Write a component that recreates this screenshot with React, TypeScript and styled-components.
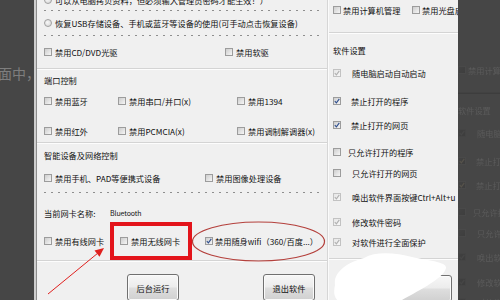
import React from "react";
import styled, { createGlobalStyle } from "styled-components";

const Global = createGlobalStyle`
  html, body { margin: 0; padding: 0; background: #464646; }
  body { font-family: "Noto Sans CJK SC", "Noto Sans", sans-serif; overflow: hidden; }
`;

const Screen = styled.div`
  position: relative;
  display: flex;
  width: 500px;
  height: 300px;
  overflow: hidden;
  background: #464646;
`;

const LeftGutter = styled.div`
  width: 34px;
  flex: none;
  padding-top: 64px;
  box-sizing: border-box;
  overflow: hidden;
`;

const GhostWords = styled.div`
  font-size: 14px;
  line-height: 18px;
  color: #7e7e7e;
  white-space: nowrap;
  margin-left: -2px;
`;

const Edge = styled.div`
  width: 2px;
  flex: none;
  background: #cdcdcd;
`;

const Window = styled.div`
  display: flex;
  width: 422px;
  flex: none;
  height: 300px;
  background: #f0f0f0;
  border-left: 1px solid #8c8c8c;
  box-sizing: border-box;
  font-size: 8.2px;
  color: #111;
`;

const LeftCol = styled.div`
  width: 290px;
  flex: none;
  box-sizing: border-box;
  padding-left: 7px;
  display: flex;
  flex-direction: column;
`;

const Divider = styled.div`
  width: 1px;
  flex: none;
  background: #d6d6d6;
  border-right: 1px solid #fbfbfb;
`;

const SettingsCol = styled.div<{ $ghost?: boolean }>`
  width: 129px;
  flex: none;
  box-sizing: border-box;
  padding-left: ${(p) => (p.$ghost ? 0 : 4)}px;
  display: flex;
  flex-direction: column;
  overflow: hidden;
  font-size: 8.2px;
  color: #111;
  ${(p) => (p.$ghost ? "filter: invert(1); opacity: 0.12;" : "")}
`;

const RightGutter = styled.div`
  width: 42px;
  flex: none;
  padding-top: 60px;
  box-sizing: border-box;
  overflow: hidden;
`;

const Row = styled.div<{ $h: number; $cols?: string; $mt?: number }>`
  display: grid;
  grid-template-columns: ${(p) => p.$cols ?? "1fr"};
  align-items: center;
  height: ${(p) => p.$h}px;
  margin-top: ${(p) => p.$mt ?? 0}px;
  white-space: nowrap;
  flex: none;
`;

const Item = styled.span<{ $gap?: number }>`
  display: flex;
  align-items: center;
  gap: ${(p) => p.$gap ?? 3}px;
  line-height: 1;
`;

const Box = styled.span<{ $dim?: boolean }>`
  width: 8px;
  height: 8px;
  box-sizing: border-box;
  border: 1px solid ${(p) => (p.$dim ? "#c2c2c2" : "#9c9c9c")};
  background: ${(p) =>
    p.$dim ? "linear-gradient(135deg, #e6e6e6, #f7f7f7)" : "linear-gradient(135deg, #cdcdcd, #f6f6f6)"};
  display: inline-flex;
  align-items: center;
  justify-content: center;
  flex: none;
`;

const Radio = styled.span`
  width: 8px;
  height: 8px;
  box-sizing: border-box;
  border: 1px solid #a0a0a0;
  border-radius: 50%;
  background: radial-gradient(circle at 40% 40%, #f8f8f8, #d2d2d2);
  flex: none;
`;

const Label = styled.span``;

const Small = styled.span`
  font-size: 7px;
  letter-spacing: -0.1px;
`;

const Dotted = styled.div<{ $mt?: number }>`
  height: 1px;
  flex: none;
  margin-top: ${(p) => p.$mt ?? 0}px;
  margin-right: 7px;
  background: repeating-linear-gradient(90deg, #8e8e8e 0 2px, transparent 2px 7px);
`;

const Sep = styled.div<{ $mt?: number; $inset?: number }>`
  height: 1px;
  flex: none;
  background: #d4d4d4;
  border-bottom: 1px solid #fdfdfd;
  margin-top: ${(p) => p.$mt ?? 0}px;
  margin-left: -${(p) => p.$inset ?? 7}px;
`;

const ButtonRow = styled.div<{ $mt: number; $pl: number; $gap?: number }>`
  display: flex;
  gap: ${(p) => p.$gap ?? 0}px;
  margin-top: ${(p) => p.$mt}px;
  padding-left: ${(p) => p.$pl}px;
  flex: none;
`;

const Button = styled.button`
  width: 52px;
  height: 27px;
  flex: none;
  border: 1px solid #707070;
  border-radius: 3px;
  background: linear-gradient(#f7f7f7 0%, #ececec 48%, #dedede 52%, #d0d0d0 100%);
  box-shadow: inset 0 0 0 1px #fbfbfb;
  font: inherit;
  font-size: 8.2px;
  color: #111;
  padding: 0;
`;

const Overlay = styled.svg`
  position: absolute;
  left: 0;
  top: 0;
  width: 500px;
  height: 300px;
  pointer-events: none;
`;

type CheckState = "off" | "on" | "dim";

const Check = ({ state = "off" }: { state?: CheckState }) => (
  <Box $dim={state === "dim"}>
    {state !== "off" && (
      <svg width="6" height="6" viewBox="0 0 6 6">
        <polyline
          points="0.8,3.2 2.4,4.9 5.3,0.9"
          fill="none"
          stroke={state === "on" ? "#2f4f8f" : "#b0b0b0"}
          strokeWidth="1.1"
        />
      </svg>
    )}
  </Box>
);

const CB = ({ text, state, gap }: { text: React.ReactNode; state?: CheckState; gap?: number }) => (
  <Item $gap={gap}>
    <Check state={state} />
    <Label>{text}</Label>
  </Item>
);

const Settings = ({ ghost }: { ghost?: boolean }) => (
  <SettingsCol $ghost={ghost}>
    <Row $h={20} $cols="79px 1fr">
      <CB text="禁用计算机管理" gap={2} />
      <CB text="禁用光盘启动" gap={2} />
    </Row>
    <Sep $mt={12} $inset={4} />
    <Row $h={32}>
      <Label>软件设置</Label>
    </Row>
    <Row $h={14}>
      <CB text="随电脑启动自动启动" state="dim" gap={11} />
    </Row>
    <Row $h={14} $mt={14}>
      <CB text="禁止打开的程序" state="on" gap={10} />
    </Row>
    <Row $h={14} $mt={10}>
      <CB text="禁止打开的网页" state="on" gap={10} />
    </Row>
    <Row $h={14} $mt={13}>
      <CB text="只允许打开的程序" gap={7} />
    </Row>
    <Row $h={14} $mt={7}>
      <CB text="只允许打开的网页" gap={11} />
    </Row>
    <Row $h={14} $mt={10}>
      <CB text="唤出软件界面按键Ctrl+Alt+u" state="dim" gap={11} />
    </Row>
    <Row $h={14} $mt={11}>
      <CB text="修改软件密码" state="dim" gap={11} />
    </Row>
    <Row $h={14} $mt={6}>
      <CB text="对软件进行全面保护" state="dim" gap={11} />
    </Row>
    <Sep $mt={9} $inset={4} />
    <ButtonRow $mt={15} $pl={67}>
      <Button aria-label="button" />
    </ButtonRow>
  </SettingsCol>
);

export default function App() {
  return (
    <>
      <Global />
      <Screen>
        <LeftGutter>
          <GhostWords>面中，</GhostWords>
        </LeftGutter>
        <Edge />
        <Window>
          <LeftCol>
            <Row $h={14} $mt={-7}>
              <Item $gap={3}>
                <Radio />
                <Label>可以从电脑拷贝资料，但必须输入管理员密码才能生效！）</Label>
              </Item>
            </Row>
            <Dotted $mt={3} />
            <Row $h={24}>
              <Item $gap={3}>
                <Radio />
                <Label>恢复USB存储设备、手机或蓝牙等设备的使用(可手动点击恢复设备)</Label>
              </Item>
            </Row>
            <Dotted />
            <Row $h={32} $cols="181px 1fr">
              <CB text="禁用CD/DVD光驱" />
              <CB text="禁用软驱" />
            </Row>
            <Sep />
            <Row $h={20}>
              <Label>端口控制</Label>
            </Row>
            <Row $h={22} $cols="74px 119px 1fr">
              <CB text="禁用蓝牙" />
              <CB text="禁用串口/并口(x)" />
              <CB text="禁用1394" />
            </Row>
            <Row $h={22} $mt={8} $cols="74px 119px 1fr">
              <CB text="禁用红外" />
              <CB text="禁用PCMCIA(x)" />
              <CB text="禁用调制解调器(x)" />
            </Row>
            <Sep />
            <Row $h={22}>
              <Label>智能设备及网络控制</Label>
            </Row>
            <Row $h={24} $cols="161px 1fr">
              <CB text="禁用手机、PAD等便携式设备" />
              <CB text="禁用图像处理设备" />
            </Row>
            <Dotted $mt={2} />
            <Row $h={40} $cols="66px 1fr">
              <Label>当前网卡名称:</Label>
              <Small>Bluetooth</Small>
            </Row>
            <Row $h={16} $cols="76px 85px 1fr">
              <CB text="禁用有线网卡" />
              <CB text="禁用无线网卡" />
              <CB text="禁用随身wifi（360/百度...）" state="on" gap={2} />
            </Row>
            <Sep $mt={11} />
            <ButtonRow $mt={12} $pl={83} $gap={84}>
              <Button>后台运行</Button>
              <Button>退出软件</Button>
            </ButtonRow>
          </LeftCol>
          <Divider />
          <Settings />
        </Window>
        <RightGutter>
          <Settings ghost />
        </RightGutter>
        <Overlay viewBox="0 0 500 300">
          <path
            d="M335,285 C333,272 348,262 364,258 C376,251 396,253 412,257 C430,261 447,262 446,268 C444,278 420,290 400,301 L338,301 C333,296 334,290 335,285 Z"
            fill="#ffffff"
          />
          <rect x="112" y="224" width="78" height="34" fill="none" stroke="#e3141b" strokeWidth="4" />
          <ellipse cx="258.5" cy="241.5" rx="66" ry="19.5" fill="none" stroke="#b4403c" strokeWidth="1.2" />
          <line x1="48" y1="294" x2="98" y2="253" stroke="#e0201e" strokeWidth="1" />
          <polygon points="104,248 99.5,256.7 94.5,250.5" fill="#e0201e" />
        </Overlay>
      </Screen>
    </>
  );
}
